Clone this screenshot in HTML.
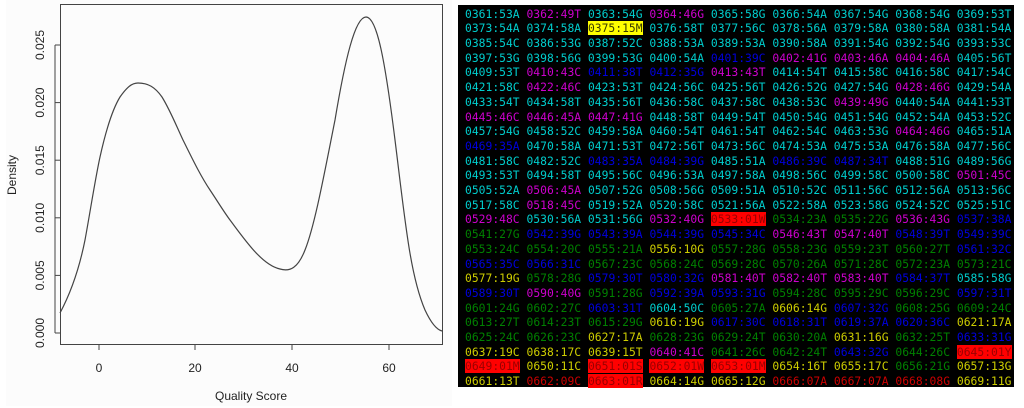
<!DOCTYPE html>
<html><head><meta charset="utf-8"><style>
html,body{margin:0;padding:0;width:1024px;height:408px;background:#fff;overflow:hidden}
#plotbg{position:absolute;left:6px;top:0;width:446px;height:406px;background:#fcfcfc}
svg{position:absolute;left:0;top:0}
#term{position:absolute;left:458px;top:5px;width:556px;height:382px;background:#000}
pre{position:absolute;left:465px;top:6.6px;margin:0;font-family:"DejaVu Sans Mono","Liberation Mono",monospace;font-size:11.35px;line-height:14.7px;color:#00cdcd;white-space:pre}
.m{color:#cd00cd}.b{color:#0000dd}.g{color:#008000}.y{color:#cdcd00}.r{color:#cd0000}
.Y{background:#ffff00;color:#3a3a00}.R{background:#ff0000;color:#9a0000}
</style></head><body>
<div id="plotbg"></div>
<svg width="460" height="408" xmlns="http://www.w3.org/2000/svg" font-family="Liberation Sans, sans-serif" font-size="12" fill="#222">
<rect x="60.5" y="4.5" width="382" height="340" fill="none" stroke="#444" stroke-width="1"/>
<g stroke="#444">
<line x1="55" y1="333" x2="60" y2="333"/><line x1="55" y1="275.4" x2="60" y2="275.4"/><line x1="55" y1="217.8" x2="60" y2="217.8"/><line x1="55" y1="160.2" x2="60" y2="160.2"/><line x1="55" y1="102.6" x2="60" y2="102.6"/><line x1="55" y1="45" x2="60" y2="45"/>
<line x1="55" y1="45" x2="55" y2="333"/>
<line x1="99" y1="344" x2="99" y2="350"/><line x1="195" y1="344" x2="195" y2="350"/><line x1="292" y1="344" x2="292" y2="350"/><line x1="389" y1="344" x2="389" y2="350"/>
</g>
<g text-anchor="middle">
<text transform="translate(44,333) rotate(-90)">0.000</text>
<text transform="translate(44,275.4) rotate(-90)">0.005</text>
<text transform="translate(44,217.8) rotate(-90)">0.010</text>
<text transform="translate(44,160.2) rotate(-90)">0.015</text>
<text transform="translate(44,102.6) rotate(-90)">0.020</text>
<text transform="translate(44,45) rotate(-90)">0.025</text>
<text transform="translate(16,175) rotate(-90)">Density</text>
<text x="99" y="372">0</text><text x="195" y="372">20</text><text x="292" y="372">40</text><text x="389" y="372">60</text>
<text x="251" y="400">Quality Score</text>
</g>
<path d="M60,313 C68,298 78,275 85,240 C90,213 95,180 100,157 C106,130 112,110 120,97 C127,87 132,83 138,83 C148,83 155,87 162,97 C170,110 176,125 183,140 C192,158 200,175 210,190 C218,202 224,212 230,220 C245,240 262,265 280,269 C290,272 298,268 305,250 C315,225 325,170 335,120 C345,60 355,17 366,17 C377,17 385,60 395,140 C405,220 410,275 425,310 C432,325 438,330 442,331" fill="none" stroke="#444" stroke-width="1.2"/>
</svg>
<div id="term"></div>
<pre>0361:53A <span class="m">0362:49T</span> 0363:54G <span class="m">0364:46G</span> 0365:58G 0366:54A 0367:54G 0368:54G 0369:53T
0373:54A 0374:58A <span class="Y">0375:15M</span> 0376:58T 0377:56C 0378:56A 0379:58A 0380:58A 0381:54A
0385:54C 0386:53G 0387:52C 0388:53A 0389:53A 0390:58A 0391:54G 0392:54G 0393:53C
0397:53G 0398:56G 0399:53G 0400:54A <span class="b">0401:39C</span> <span class="m">0402:41G</span> <span class="m">0403:46A</span> <span class="m">0404:46A</span> 0405:56T
0409:53T <span class="m">0410:43C</span> <span class="b">0411:38T</span> <span class="b">0412:35G</span> <span class="m">0413:43T</span> 0414:54T 0415:58C 0416:58C 0417:54C
0421:58C <span class="m">0422:46C</span> 0423:53T 0424:56C 0425:56T 0426:52G 0427:54G <span class="m">0428:46G</span> 0429:54A
0433:54T 0434:58T 0435:56T 0436:58C 0437:58C 0438:53C <span class="m">0439:49G</span> 0440:54A 0441:53T
<span class="m">0445:46C</span> <span class="m">0446:45A</span> <span class="m">0447:41G</span> 0448:58T 0449:54T 0450:54G 0451:54G 0452:54A 0453:52C
0457:54G 0458:52C 0459:58A 0460:54T 0461:54T 0462:54C 0463:53G <span class="m">0464:46G</span> 0465:51A
<span class="b">0469:35A</span> 0470:58A 0471:53T 0472:56T 0473:56C 0474:53A 0475:53A 0476:58A 0477:56C
0481:58C 0482:52C <span class="b">0483:35A</span> <span class="b">0484:39G</span> 0485:51A <span class="b">0486:39C</span> <span class="b">0487:34T</span> 0488:51G 0489:56G
0493:53T 0494:58T 0495:56C 0496:53A 0497:58A 0498:56C 0499:58C 0500:58C <span class="m">0501:45C</span>
0505:52A <span class="m">0506:45A</span> 0507:52G 0508:56G 0509:51A 0510:52C 0511:56C 0512:56A 0513:56C
0517:58C <span class="m">0518:45C</span> 0519:52A 0520:58C 0521:56A 0522:58A 0523:58G 0524:52C 0525:51C
<span class="m">0529:48C</span> 0530:56A 0531:56G <span class="m">0532:40G</span> <span class="R">0533:01W</span> <span class="g">0534:23A</span> <span class="g">0535:22G</span> <span class="m">0536:43G</span> <span class="b">0537:38A</span>
<span class="g">0541:27G</span> <span class="b">0542:39G</span> <span class="b">0543:39A</span> <span class="b">0544:39G</span> <span class="b">0545:34C</span> <span class="m">0546:43T</span> <span class="m">0547:40T</span> <span class="b">0548:39T</span> <span class="b">0549:39C</span>
<span class="g">0553:24C</span> <span class="g">0554:20C</span> <span class="g">0555:21A</span> <span class="y">0556:10G</span> <span class="g">0557:28G</span> <span class="g">0558:23G</span> <span class="g">0559:23T</span> <span class="g">0560:27T</span> <span class="b">0561:32C</span>
<span class="b">0565:35C</span> <span class="b">0566:31C</span> <span class="g">0567:23C</span> <span class="g">0568:24C</span> <span class="g">0569:28C</span> <span class="g">0570:26A</span> <span class="g">0571:28C</span> <span class="g">0572:23A</span> <span class="g">0573:21C</span>
<span class="y">0577:19G</span> <span class="g">0578:28G</span> <span class="b">0579:30T</span> <span class="b">0580:32G</span> <span class="m">0581:40T</span> <span class="m">0582:40T</span> <span class="m">0583:40T</span> <span class="b">0584:37T</span> 0585:58G
<span class="b">0589:30T</span> <span class="m">0590:40G</span> <span class="g">0591:28G</span> <span class="b">0592:39A</span> <span class="b">0593:31G</span> <span class="g">0594:28C</span> <span class="g">0595:29C</span> <span class="g">0596:29C</span> <span class="b">0597:31T</span>
<span class="g">0601:24G</span> <span class="g">0602:27C</span> <span class="b">0603:31T</span> 0604:50C <span class="g">0605:27A</span> <span class="y">0606:14G</span> <span class="b">0607:32G</span> <span class="g">0608:25G</span> <span class="g">0609:24C</span>
<span class="g">0613:27T</span> <span class="g">0614:23T</span> <span class="g">0615:29G</span> <span class="y">0616:19G</span> <span class="b">0617:30C</span> <span class="b">0618:31T</span> <span class="b">0619:37A</span> <span class="b">0620:36C</span> <span class="y">0621:17A</span>
<span class="g">0625:24C</span> <span class="g">0626:23C</span> <span class="y">0627:17A</span> <span class="g">0628:23G</span> <span class="g">0629:24T</span> <span class="g">0630:20A</span> <span class="y">0631:16G</span> <span class="g">0632:25T</span> <span class="b">0633:31G</span>
<span class="y">0637:19C</span> <span class="y">0638:17C</span> <span class="y">0639:15T</span> <span class="m">0640:41C</span> <span class="g">0641:26C</span> <span class="g">0642:24T</span> <span class="b">0643:32G</span> <span class="g">0644:26C</span> <span class="R">0645:01Y</span>
<span class="R">0649:01M</span> <span class="y">0650:11C</span> <span class="R">0651:01S</span> <span class="R">0652:01W</span> <span class="R">0653:01M</span> <span class="y">0654:16T</span> <span class="y">0655:17C</span> <span class="g">0656:21G</span> <span class="y">0657:13G</span>
<span class="y">0661:13T</span> <span class="r">0662:09C</span> <span class="R">0663:01R</span> <span class="y">0664:14G</span> <span class="y">0665:12G</span> <span class="r">0666:07A</span> <span class="r">0667:07A</span> <span class="r">0668:08G</span> <span class="y">0669:11G</span></pre>
</body></html>
